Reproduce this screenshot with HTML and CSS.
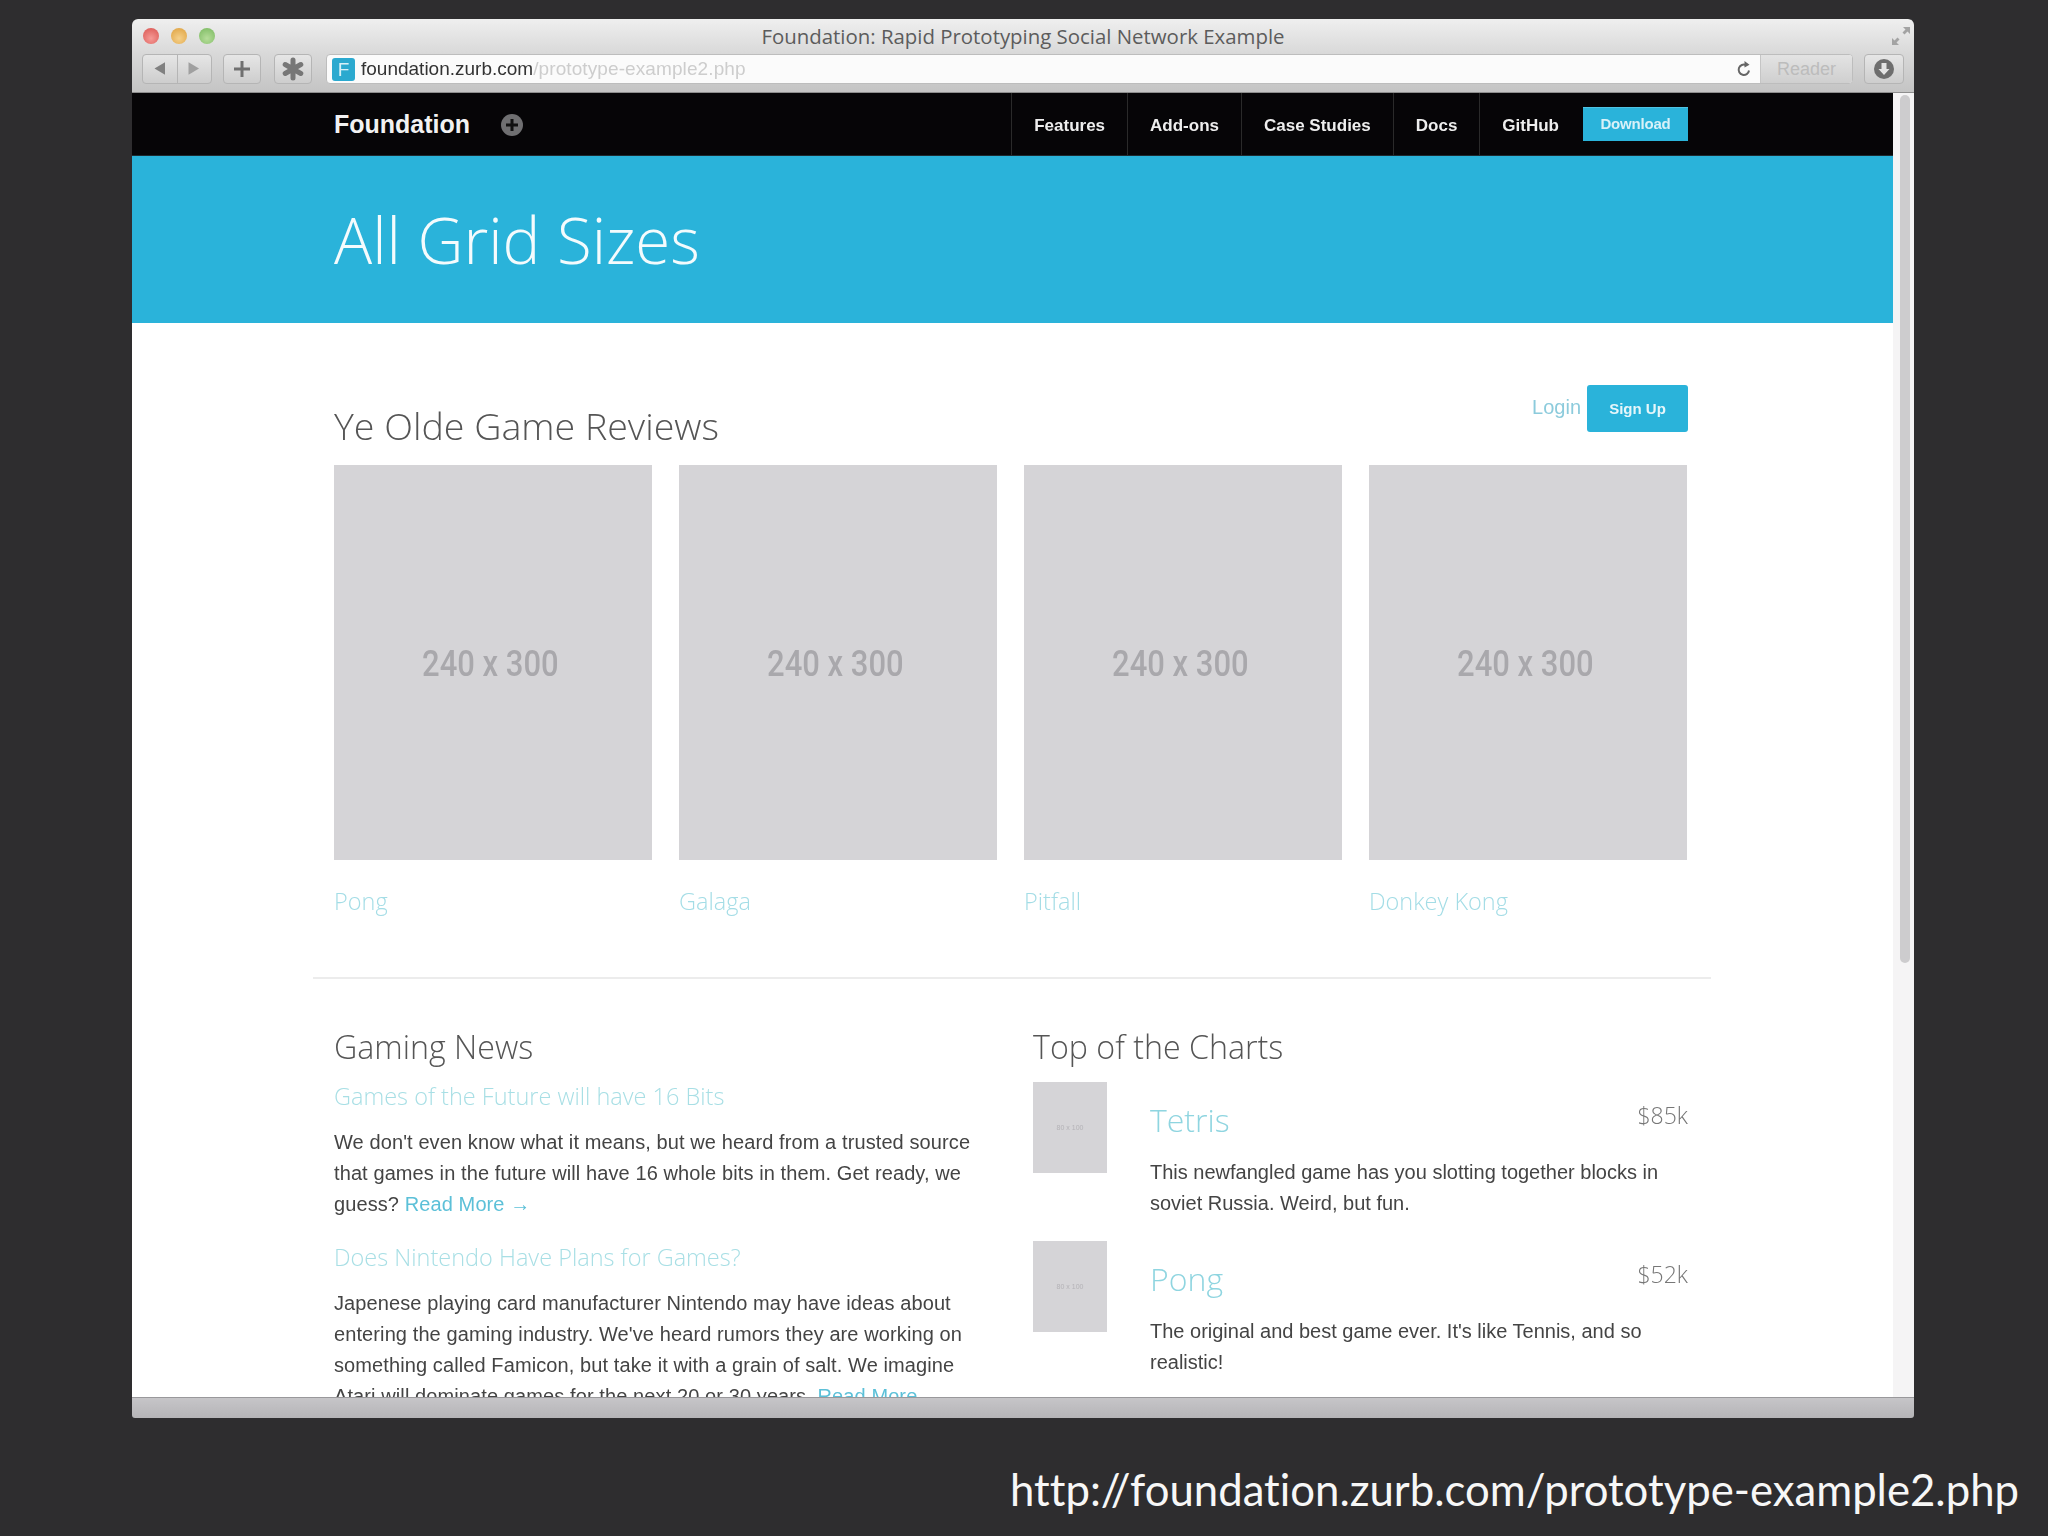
FILE: index.html
```html
<!DOCTYPE html>
<html lang="en">
<head>
    <meta charset="UTF-8">
    <title>Foundation: Rapid Prototyping Social Network Example</title>
    <link rel="stylesheet" href="styles.css">
</head>
<body>
    <div class="window">
        <div class="titlebar">
            <div class="lights">
                <span class="light light-red"></span>
                <span class="light light-yellow"></span>
                <span class="light light-green"></span>
            </div>
            <div class="window-title">Foundation: Rapid Prototyping Social Network Example</div>
            <svg class="resize-icon" width="22" height="22" viewBox="0 0 22 22">
                <path d="M13 2h7v7l-2.500-2.500-3 3-2-2 3-3zM9 20H2v-7l2.500 2.500 3-3 2 2-3 3z" fill="#a3a3a3"/>
            </svg>
        </div>
        <div class="toolbar">
            <div class="tool-btn nav-btns">
                <svg width="35" height="30" viewBox="0 0 35 30"><path d="M23 8v13l-11-6.500z" fill="#808080"/></svg>
                <svg width="35" height="30" viewBox="0 0 35 30"><path d="M11 8v13l11-6.500z" fill="#a0a0a0"/></svg>
            </div>
            <div class="tool-btn plus-btn">
                <svg width="18" height="18" viewBox="0 0 18 18"><path d="M7.500 1h3v6.500H17v3h-6.500V17h-3v-6.500H1v-3h6.500z" fill="#707070"/></svg>
            </div>
            <div class="tool-btn star-btn">
                <svg width="24" height="24" viewBox="0 0 24 24">
                    <path d="M12 3v18M4.200 7.500l15.600 9M19.800 7.500l-15.600 9" stroke="#777" stroke-width="5" stroke-linecap="round"/>
                </svg>
            </div>
            <div class="address">
                <span class="favicon">F</span>
                <span class="url-host">foundation.zurb.com</span><span class="url-path">/prototype-example2.php</span>
                <svg class="reload" width="16" height="18" viewBox="0 0 16 18">
                    <path d="M13 10.500a5.200 5.200 0 1 1-3-5.500" fill="none" stroke="#666" stroke-width="2"/>
                    <path d="M8.500 1l5 3.800-5 2.700z" fill="#666"/>
                </svg>
                <span class="reader">Reader</span>
            </div>
            <div class="tool-btn download-btn">
                <svg width="24" height="24" viewBox="0 0 24 24">
                    <circle cx="12" cy="12" r="10" fill="#6e6e6e"/>
                    <path d="M9.500 6h5v6h3L12 18l-5.500-6h3z" fill="#e4e4e4"/>
                </svg>
            </div>
        </div>

        <div class="viewport">
            <div class="page">
                <div class="topnav">
                    <div class="brand">Foundation</div>
                    <svg class="brand-icon" width="22" height="22" viewBox="0 0 22 22">
                        <circle cx="11" cy="11" r="11" fill="#6f6f71"/>
                        <path d="M9.500 5h3v4.500H17v3h-4.500V17h-3v-4.500H5v-3h4.500z" fill="#111"/>
                    </svg>
                    <ul class="nav-links">
                        <li class="nav-link">Features</li>
                        <li class="nav-link">Add-ons</li>
                        <li class="nav-link">Case Studies</li>
                        <li class="nav-link">Docs</li>
                        <li class="nav-link nav-link-last">GitHub</li>
                    </ul>
                    <a class="nav-download">Download</a>
                </div>

                <div class="hero">
                    <h1>All Grid Sizes</h1>
                </div>

                <div class="container">
                    <div class="section-head">
                        <h2>Ye Olde Game Reviews</h2>
                        <div class="auth">
                            <a class="login">Login</a>
                            <a class="signup">Sign Up</a>
                        </div>
                    </div>

                    <div class="games">
                        <div class="game">
                            <div class="placeholder"><span class="placeholder-text">240 x 300</span></div>
                            <a class="game-name">Pong</a>
                        </div>
                        <div class="game">
                            <div class="placeholder"><span class="placeholder-text">240 x 300</span></div>
                            <a class="game-name">Galaga</a>
                        </div>
                        <div class="game">
                            <div class="placeholder"><span class="placeholder-text">240 x 300</span></div>
                            <a class="game-name">Pitfall</a>
                        </div>
                        <div class="game">
                            <div class="placeholder"><span class="placeholder-text">240 x 300</span></div>
                            <a class="game-name">Donkey Kong</a>
                        </div>
                    </div>

                    <hr class="divider">

                    <div class="columns">
                        <div class="news">
                            <h2>Gaming News</h2>
                            <h3>Games of the Future will have 16 Bits</h3>
                            <p>We don't even know what it means, but we heard from a trusted source that games in the future will have 16 whole bits in them. Get ready, we guess? <a class="more">Read More →</a></p>
                            <h3>Does Nintendo Have Plans for Games?</h3>
                            <p>Japenese playing card manufacturer Nintendo may have ideas about entering the gaming industry. We've heard rumors they are working on something called Famicon, but take it with a grain of salt. We imagine Atari will dominate games for the next 20 or 30 years. <a class="more">Read More →</a></p>
                        </div>
                        <div class="charts">
                            <h2>Top of the Charts</h2>
                            <div class="chart-row">
                                <div class="thumb">80 x 100</div>
                                <div class="chart-body">
                                    <div class="chart-head">
                                        <a class="chart-name">Tetris</a>
                                        <span class="price">$85k</span>
                                    </div>
                                    <p>This newfangled game has you slotting together blocks in soviet Russia. Weird, but fun.</p>
                                </div>
                            </div>
                            <div class="chart-row">
                                <div class="thumb">80 x 100</div>
                                <div class="chart-body">
                                    <div class="chart-head">
                                        <a class="chart-name">Pong</a>
                                        <span class="price">$52k</span>
                                    </div>
                                    <p>The original and best game ever. It's like Tennis, and so realistic!</p>
                                </div>
                            </div>
                        </div>
                    </div>
                </div>
            </div>
            <div class="scrollbar">
                <div class="scroll-thumb"></div>
            </div>
        </div>
        <div class="statusbar"></div>
    </div>

    <div class="caption">http://foundation.zurb.com/prototype-example2.php</div>
</body>
</html>
```

FILE: styles.css
```css
html, body {
    margin: 0;
    height: 100%;
}

body {
    background-color: #2e2d2f;
    font-family: "Liberation Sans", Arial, sans-serif;
    overflow: hidden;
}

.window {
    width: 1782px;
    height: 1399px;
    margin: 19px 0 0 132px;
    display: flex;
    flex-direction: column;
    border-radius: 6px 6px 3px 3px;
    overflow: hidden;
    filter: blur(0.7px);
}

/* browser chrome */
.titlebar {
    height: 34px;
    display: grid;
    grid-template-columns: 1fr auto 1fr;
    align-items: center;
    background: linear-gradient(#efefef, #d9d9d9);
}

.lights {
    display: flex;
    gap: 12px;
    padding-left: 11px;
}

.light {
    width: 16px;
    height: 16px;
    border-radius: 50%;
}

.light-red { background: radial-gradient(circle at 50% 65%, #f59a96, #d9534f); }
.light-yellow { background: radial-gradient(circle at 50% 65%, #f5d08a, #dd9f3c); }
.light-green { background: radial-gradient(circle at 50% 65%, #b6dd9a, #78b85e); }

.window-title {
    font-family: "Open Sans", sans-serif;
    font-size: 20.4px;
    color: #5c5c5c;
    white-space: nowrap;
}

.resize-icon {
    justify-self: end;
    margin-right: 2px;
}

.toolbar {
    height: 40px;
    display: flex;
    align-items: flex-start;
    padding: 1px 0 0 10px;
    box-sizing: border-box;
    background: linear-gradient(#d9d9d9, #c4c4c4);
    border-bottom: 1px solid #8e8e8e;
}

.tool-btn {
    height: 30px;
    display: flex;
    align-items: center;
    justify-content: center;
    box-sizing: border-box;
    border: 1px solid #b5b5b5;
    border-radius: 4px;
    background: linear-gradient(#e6e6e6, #cdcdcd);
}

.nav-btns { width: 70px; }
.nav-btns svg:first-child { border-right: 1px solid #b5b5b5; }

.plus-btn {
    width: 38px;
    margin-left: 11px;
}

.star-btn {
    width: 38px;
    margin-left: 13px;
}

.address {
    width: 1527px;
    height: 30px;
    margin-left: 14px;
    display: flex;
    align-items: center;
    box-sizing: border-box;
    padding-left: 5px;
    border: 1px solid #bdbdbd;
    border-radius: 4px;
    background-color: #fbfbfb;
    font-size: 19px;
    overflow: hidden;
}

.favicon {
    width: 23px;
    height: 23px;
    margin-right: 6px;
    border-radius: 3px;
    background-color: #2ba9cf;
    color: #d7f0f7;
    font-size: 19px;
    line-height: 23px;
    text-align: center;
}

.url-host { color: #333; }

.url-path {
    color: #cdcdcd;
    letter-spacing: 0.1px;
}

.reload {
    margin-left: auto;
    margin-right: 8px;
}

.reader {
    width: 91px;
    height: 28px;
    line-height: 28px;
    text-align: center;
    background: linear-gradient(#e3e3e3, #cfcfcf);
    border-left: 1px solid #c5c5c5;
    color: #bcbcbc;
    font-size: 18px;
}

.download-btn {
    width: 40px;
    margin-left: 11px;
}

/* page */
.viewport {
    flex: 1;
    display: flex;
    min-height: 0;
}

.page {
    width: 1761px;
    background-color: #fff;
    overflow: hidden;
}

.scrollbar {
    width: 21px;
    padding: 2px 4px 0 7px;
    box-sizing: border-box;
    background-color: #f5f4f5;
}

.scroll-thumb {
    height: 868px;
    border-radius: 5px;
    background-color: #cdccce;
}

.statusbar {
    height: 21px;
    box-sizing: border-box;
    border-top: 1px solid #99989b;
    background: linear-gradient(#c6c5c8, #b5b4b7);
}

.topnav {
    height: 63px;
    display: flex;
    align-items: center;
    box-sizing: border-box;
    padding-left: 202px;
    background-color: #060507;
    border-bottom: 1px solid #1e2a30;
}

.brand {
    color: #f2f2f2;
    font-size: 25px;
    font-weight: bold;
}

.brand-icon {
    margin: 2px 0 0 31px;
}

.nav-links {
    list-style-type: none;
    display: flex;
    align-self: stretch;
    margin: 0 0 0 auto;
    padding: 0;
}

.nav-link {
    display: flex;
    align-items: center;
    padding: 4px 22px 0;
    border-left: 1px solid #2a2a2a;
    color: #eee;
    font-size: 17px;
    font-weight: bold;
}

.nav-link-last {
    padding-right: 24px;
}

.nav-download {
    width: 105px;
    height: 34px;
    margin-right: 205px;
    box-sizing: border-box;
    border-top: 1px solid #4fc3e3;
    background-color: #2ab3da;
    color: #d8f1f8;
    font-size: 15px;
    font-weight: bold;
    line-height: 32px;
    text-align: center;
    letter-spacing: -0.2px;
}

.hero {
    height: 167px;
    display: flex;
    align-items: center;
    box-sizing: border-box;
    padding-left: 202px;
    background-color: #2ab3da;
}

h1, h2, h3 {
    margin: 0;
    font-family: "Open Sans", sans-serif;
    font-weight: 300;
}

h1 {
    color: #f4fbfd;
    font-size: 63.600px;
    line-height: 80px;
}

.container {
    width: 1354px;
    margin-left: 202px;
}

h2 {
    color: #555;
    font-size: 32.200px;
    line-height: 44px;
}

.section-head {
    display: flex;
    justify-content: space-between;
    padding-top: 62px;
    margin-bottom: 17px;
    height: 63px;
}

.section-head h2 {
    font-size: 37.600px;
    margin-top: 19px;
}

.auth {
    display: flex;
    align-items: flex-start;
    gap: 6px;
}

.login {
    margin-top: 11px;
    color: #8ccbdc;
    font-size: 20px;
}

.signup {
    width: 101px;
    height: 47px;
    border-radius: 3px;
    background-color: #2ab3da;
    color: #e6f6fa;
    font-size: 15px;
    font-weight: bold;
    line-height: 48px;
    text-align: center;
}

.games {
    display: grid;
    grid-template-columns: repeat(4, 318px);
    column-gap: 27px;
}

.placeholder {
    height: 395px;
    display: flex;
    align-items: center;
    justify-content: center;
    padding: 3px 6px 0 0;
    box-sizing: border-box;
    background-color: #d5d4d7;
}

.placeholder-text {
    color: #a9a8ac;
    font-family: Roboto, sans-serif;
    font-size: 36px;
    font-weight: 500;
    transform: scaleX(0.86);
}

.game-name {
    display: block;
    margin-top: 25px;
    color: #a4dde6;
    font-family: "Open Sans", sans-serif;
    font-size: 23.500px;
    font-weight: 300;
    line-height: 32px;
}

.divider {
    width: 1398px;
    height: 2px;
    margin: 60px 0 46px -21px;
    border: none;
    background-color: #ececec;
}

.columns {
    display: grid;
    grid-template-columns: 699px 1fr;
}

h3 {
    margin-top: 21px;
    color: #a8dfe5;
    font-size: 23.500px;
    line-height: 32px;
}

h2 + h3 {
    margin-top: 11px;
}

p {
    margin: 15px 0 0;
    color: #444;
    font-size: 20px;
    line-height: 31px;
}

.news p {
    width: 650px;
    letter-spacing: 0.1px;
}

.more {
    color: #5cc0d8;
}

.chart-row {
    display: grid;
    grid-template-columns: 117px 1fr;
    margin-top: 13px;
}

.chart-row + .chart-row {
    margin-top: 22px;
}

.thumb {
    width: 74px;
    height: 91px;
    display: flex;
    align-items: center;
    justify-content: center;
    background-color: #d5d4d7;
    color: #b4b3b7;
    font-size: 7px;
}

.chart-body {
    padding-top: 16px;
}

.chart-body p {
    margin-top: 15px;
}

.chart-head {
    display: flex;
    justify-content: space-between;
    align-items: flex-start;
}

.chart-name {
    color: #8fd5e0;
    font-family: "Open Sans", sans-serif;
    font-size: 32px;
    font-weight: 300;
    line-height: 44px;
}

.price {
    color: #777;
    font-family: "Open Sans", sans-serif;
    font-size: 23px;
    font-weight: 300;
    line-height: 34px;
}

.caption {
    margin-top: 41px;
    padding-right: 29px;
    color: #f7f7f7;
    font-family: Lato, sans-serif;
    font-size: 43.700px;
    font-variant-ligatures: none;
    line-height: 60px;
    text-align: right;
    white-space: nowrap;
}
```
